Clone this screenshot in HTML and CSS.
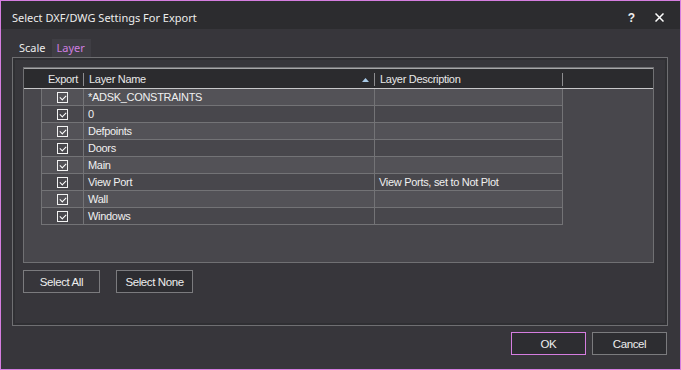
FILE: index.html
```html
<!DOCTYPE html>
<html>
<head>
<meta charset="utf-8">
<link rel="stylesheet" href="styles.css">
</head>
<body>
<div class="window">
  <div class="titlebar">
    <span class="title">Select DXF/DWG Settings For Export</span>
    <span class="tb-btns">
      <span class="help">?</span>
      <svg class="close" width="9" height="9" viewBox="0 0 9 9"><path d="M0.5 0.5L8.5 8.5M8.5 0.5L0.5 8.5" stroke="#ffffff" stroke-width="1.5"/></svg>
    </span>
  </div>
  <div class="content">
    <div class="tabs">
      <span class="tab">Scale</span>
      <span class="tab active">Layer</span>
    </div>
    <div class="panel">
      <div class="grid">
        <div class="ghead">
          <div class="hc rowhead"></div>
          <div class="hc c-exp"><span>Export</span><i class="div"></i></div>
          <div class="hc c-name"><span>Layer Name</span><svg class="sort" width="7" height="4" viewBox="0 0 7 4"><path d="M0 4L3.5 0L7 4Z" fill="#a9cbe8"/></svg><i class="div"></i></div>
          <div class="hc c-desc"><span>Layer Description</span><i class="div"></i></div>
        </div>
        <div class="gbody">
          <div class="row light"><div class="cell rowhead"></div><div class="cell c-exp"><i class="cb"></i></div><div class="cell c-name">*ADSK_CONSTRAINTS</div><div class="cell c-desc"></div></div>
          <div class="row"><div class="cell rowhead"></div><div class="cell c-exp"><i class="cb"></i></div><div class="cell c-name">0</div><div class="cell c-desc"></div></div>
          <div class="row light"><div class="cell rowhead"></div><div class="cell c-exp"><i class="cb"></i></div><div class="cell c-name">Defpoints</div><div class="cell c-desc"></div></div>
          <div class="row"><div class="cell rowhead"></div><div class="cell c-exp"><i class="cb"></i></div><div class="cell c-name">Doors</div><div class="cell c-desc"></div></div>
          <div class="row light"><div class="cell rowhead"></div><div class="cell c-exp"><i class="cb"></i></div><div class="cell c-name">Main</div><div class="cell c-desc"></div></div>
          <div class="row"><div class="cell rowhead"></div><div class="cell c-exp"><i class="cb"></i></div><div class="cell c-name">View Port</div><div class="cell c-desc">View Ports, set to Not Plot</div></div>
          <div class="row light"><div class="cell rowhead"></div><div class="cell c-exp"><i class="cb"></i></div><div class="cell c-name">Wall</div><div class="cell c-desc"></div></div>
          <div class="row"><div class="cell rowhead"></div><div class="cell c-exp"><i class="cb"></i></div><div class="cell c-name">Windows</div><div class="cell c-desc"></div></div>
        </div>
      </div>
      <div class="sel-btns">
        <button class="btn">Select All</button>
        <button class="btn dark">Select None</button>
      </div>
    </div>
    <div class="footer">
      <button class="btn dark primary">OK</button>
      <button class="btn dark">Cancel</button>
    </div>
  </div>
</div>
</body>
</html>
```
FILE: styles.css
```css
* { box-sizing: border-box; }
html, body { margin: 0; padding: 0; background: #37363b; }
.window {
  width: 681px;
  height: 370px;
  border: 1px solid #d57de0;
  background: #37363b;
  display: flex;
  flex-direction: column;
  font-family: "Noto Sans", "Open Sans", sans-serif;
  color: #eeeeee;
}
.titlebar {
  height: 28px;
  flex: none;
  background: #2c2c2f;
  display: flex;
  align-items: center;
  justify-content: space-between;
  padding: 5px 16px 0 11px;
  font-size: 11px;
}
.title { color: #ececec; }
.tb-btns { display: flex; align-items: center; gap: 20px; }
.help { font-size: 12px; font-weight: bold; color: #f0f0f0; font-family: "Liberation Sans", sans-serif; }
.close { display: block; }
.content {
  flex: 1;
  display: flex;
  flex-direction: column;
  padding: 0 12px 0 11px;
}
.tabs {
  height: 28px;
  display: flex;
  align-items: flex-end;
  padding-left: 2px;
  font-size: 11px;
}
.tab {
  height: 18px;
  line-height: 17px;
  padding: 0 6px 0 5px;
  color: #ececec;
}
.tab.active {
  background: #3f3e44;
  color: #cf7ee0;
}
.panel {
  height: 269px;
  border: 1px solid #6f6f72;
  box-shadow: inset 0 0 0 2px #2f2f33;
  padding: 9px 0 0 10px;
  display: flex;
  flex-direction: column;
}
.grid {
  width: 631px;
  height: 196px;
  border: 1px solid #707073;
  background: #48474c;
  font-family: "Liberation Sans", Arial, sans-serif;
  font-size: 11px;
  letter-spacing: -0.3px;
}
.ghead {
  height: 21px;
  display: flex;
  background: #2b2b2e;
  border-top: 1px solid #a7a7a9;
  border-bottom: 1px solid #c8c8ca;
}
.hc {
  position: relative;
  display: flex;
  align-items: center;
  color: #e8e8e8;
}
.hc .div {
  position: absolute;
  right: 0;
  top: 4px;
  height: 13px;
  width: 1px;
  background: #8d8d90;
}
.hc.c-exp { justify-content: center; }
.hc.c-name, .hc.c-desc { padding-left: 5px; }
.sort { position: absolute; right: 6px; top: 9px; }
.rowhead { width: 18px; }
.c-exp { width: 42px; }
.c-name { width: 291px; }
.c-desc { width: 188px; }
.gbody { display: flex; flex-direction: column; }
.row { display: flex; height: 17px; }
.cell {
  border-right: 1px solid #737376;
  border-bottom: 1px solid #737376;
  display: flex;
  align-items: center;
  padding-left: 4px;
  color: #f0f0f0;
  white-space: nowrap;
}
.row.light .cell { background: #535257; }
.row .cell { background: #48474c; }
.row .cell.rowhead { background: #48474c; border-bottom: none; padding: 0; }
.cell.c-exp { justify-content: center; padding-left: 0; }
.cb {
  display: block;
  width: 11px;
  height: 11px;
  border: 1px solid #f2f2f2;
  position: relative;
}
.cb::after {
  content: "";
  position: absolute;
  left: 2px;
  top: 2px;
  width: 5px;
  height: 3px;
  border-left: 1.5px solid #ffffff;
  border-bottom: 1.5px solid #ffffff;
  transform: rotate(-45deg);
  transform-origin: center;
}
.sel-btns {
  display: flex;
  gap: 16px;
  margin-top: 7px;
}
.btn {
  width: 77px;
  height: 23px;
  border: 1px solid #7b7b7e;
  background: #37363b;
  color: #eeeeee;
  font-family: "Liberation Sans", Arial, sans-serif;
  font-size: 11.5px;
  letter-spacing: -0.4px;
  padding: 0;
}
.btn.dark { background: #2d2d31; }
.footer {
  display: flex;
  justify-content: flex-end;
  gap: 6px;
  padding-top: 6px;
  padding-right: 1px;
}
.footer .btn { width: 75px; }
.btn.primary { border-color: #d57de0; }
```
